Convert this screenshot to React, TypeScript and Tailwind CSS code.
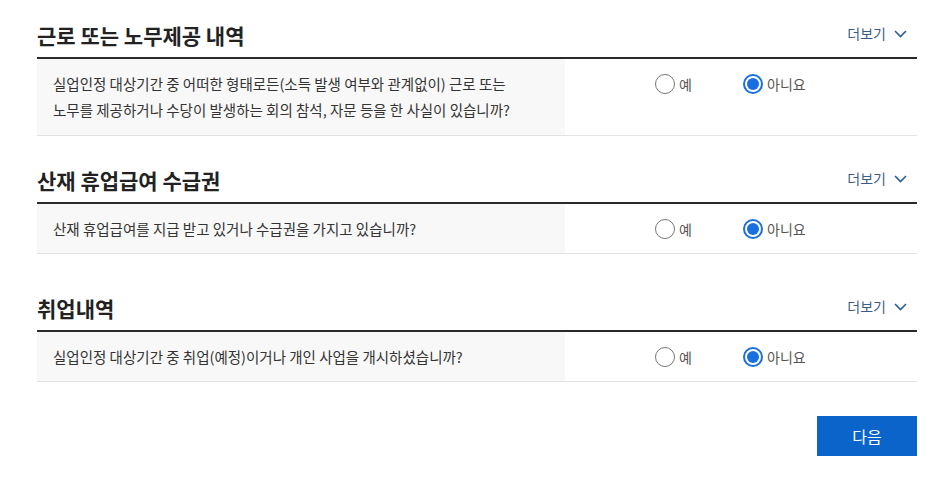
import React from "react";

const font = { fontFamily: '"Noto Sans CJK KR", "Noto Sans", sans-serif' };

function Radio({ checked, label }: { checked: boolean; label: string }) {
  return (
    <div className="flex items-center w-[88px]">
      {checked ? (
        <div className="w-[20px] h-[20px] rounded-full border-2 border-[#1a6fe0] flex items-center justify-center bg-white">
          <div className="w-[12px] h-[12px] rounded-full bg-[#1a6fe0]" />
        </div>
      ) : (
        <div className="w-[20px] h-[20px] rounded-full border border-[#777] bg-white" />
      )}
      <span className="ml-[4px] text-[14px] text-[#555] leading-none">{label}</span>
    </div>
  );
}

function Section({
  title,
  lines,
  className,
  rowClass,
}: {
  title: string;
  lines: string[];
  className?: string;
  rowClass: string;
}) {
  return (
    <div className={className}>
      <div className="flex items-end justify-between pb-[10px]">
        <h2 className="text-[21px] leading-[24px] font-bold text-[#222]">{title}</h2>
        <div className="flex items-center gap-[8px] pr-[10px] mb-[3px]">
          <span className="text-[14px] text-[#3b5b85]">더보기</span>
          <svg width="13" height="8" viewBox="0 0 13 8" fill="none">
            <path d="M1 1l5.5 5.5L12 1" stroke="#2b5f9e" strokeWidth="1.6" />
          </svg>
        </div>
      </div>
      <div className="border-t-2 border-[#2a2a2a]" />
      <div className="flex border-b border-[#e3e3e3]">
        <div className={`w-[528px] bg-[#f8f8f8] px-[16px] flex flex-col justify-center ${rowClass}`}>
          {lines.map((l, i) => (
            <p key={i} className="text-[14.5px] leading-[26px] text-[#333] whitespace-nowrap">
              {l}
            </p>
          ))}
        </div>
        <div className="flex items-start pt-[15px] pl-[90px]">
          <Radio checked={false} label="예" />
          <Radio checked label="아니요" />
        </div>
      </div>
    </div>
  );
}

export default function App() {
  return (
    <div className="w-[949px] h-[487px] bg-white" style={font}>
      <div className="ml-[37px] w-[880px] pt-[23px]">
        <Section
          title="근로 또는 노무제공 내역"
          lines={[
            "실업인정 대상기간 중 어떠한 형태로든(소득 발생 여부와 관계없이) 근로 또는",
            "노무를 제공하거나 수당이 발생하는 회의 참석, 자문 등을 한 사실이 있습니까?",
          ]}
          rowClass="h-[76px]"
        />
        <Section
          className="mt-[32px]"
          title="산재 휴업급여 수급권"
          lines={["산재 휴업급여를 지급 받고 있거나 수급권을 가지고 있습니까?"]}
          rowClass="h-[49px]"
        />
        <Section
          className="mt-[42px]"
          title="취업내역"
          lines={["실업인정 대상기간 중 취업(예정)이거나 개인 사업을 개시하셨습니까?"]}
          rowClass="h-[49px]"
        />
        <div className="flex justify-end mt-[34px]">
          <button className="w-[100px] h-[40px] bg-[#0b64c9] text-white text-[16px]">다음</button>
        </div>
      </div>
    </div>
  );
}
